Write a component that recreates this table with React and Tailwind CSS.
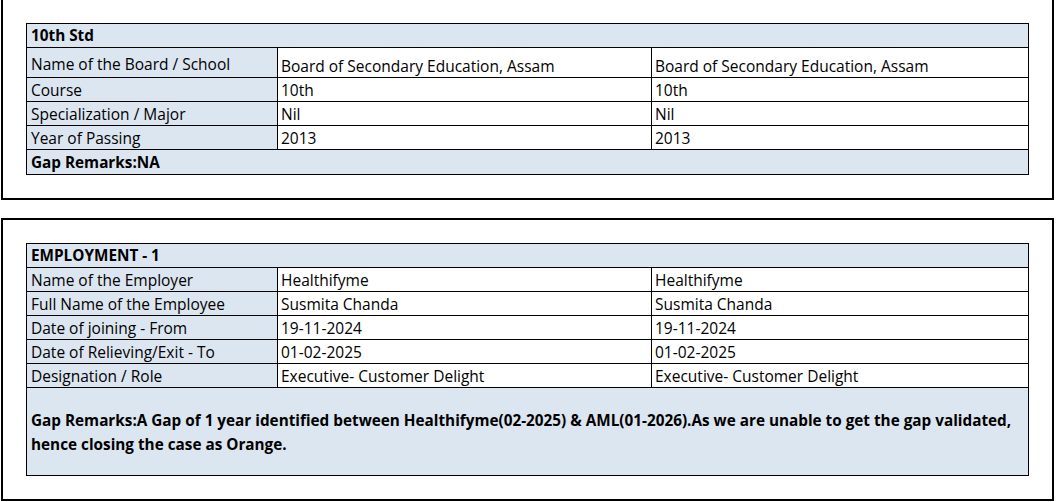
import React from "react";

const BLUE = "bg-[#dce6f1]";

function Row({ label, v1, v2, tall }) {
  const h = tall ? "h-[29px]" : "h-[23px]";
  return (
    <>
      <div className={`${h} ${BLUE} flex items-end pl-[4px] leading-[21px] ${tall ? "pb-[2px]" : ""}`}>{label}</div>
      <div className={`${h} bg-white flex items-end pl-[3px] leading-[21px]`}>{v1}</div>
      <div className={`${h} bg-white flex items-end pl-[3px] leading-[21px]`}>{v2}</div>
    </>
  );
}

export default function App() {
  return (
    <div className="bg-white w-[1057px] h-[502px] pl-px text-black text-[15.5px] font-['Open_Sans',_'Liberation_Sans',_sans-serif] overflow-hidden">
      <div className="w-[1053px] border-x-2 border-b-2 border-black px-[23px] pt-[23px] pb-[23px]">
        <div className="grid grid-cols-[250px_373px_376px] gap-px bg-black border border-black w-[1003px]">
          <div className={`col-span-3 h-[23px] ${BLUE} flex items-center pl-[4px] font-bold text-[15.3px]`}>10th Std</div>
          <Row label="Name of the Board / School" v1="Board of Secondary Education, Assam" v2="Board of Secondary Education, Assam" tall />
          <Row label="Course" v1="10th" v2="10th" />
          <Row label="Specialization / Major" v1="Nil" v2="Nil" />
          <Row label="Year of Passing" v1="2013" v2="2013" />
          <div className={`col-span-3 h-[24px] ${BLUE} flex items-center pl-[4px] font-bold text-[15.3px]`}>Gap Remarks:NA</div>
        </div>
      </div>
      <div className="mt-[18px] w-[1053px] border-2 border-black p-[23px]">
        <div className="grid grid-cols-[250px_373px_376px] gap-px bg-black border border-black w-[1003px]">
          <div className={`col-span-3 h-[23px] ${BLUE} flex items-center pl-[4px] font-bold text-[15.3px]`}>EMPLOYMENT - 1</div>
          <Row label="Name of the Employer" v1="Healthifyme" v2="Healthifyme" />
          <Row label="Full Name of the Employee" v1="Susmita Chanda" v2="Susmita Chanda" />
          <Row label="Date of joining - From" v1="19-11-2024" v2="19-11-2024" />
          <Row label="Date of Relieving/Exit - To" v1="01-02-2025" v2="01-02-2025" />
          <Row label="Designation / Role" v1="Executive- Customer Delight" v2="Executive- Customer Delight" />
          <div className={`col-span-3 h-[87px] ${BLUE} flex items-center pl-[4px] font-bold text-[15.3px] leading-[24px] whitespace-nowrap`}>
            <div>
              Gap Remarks:A Gap of 1 year identified between Healthifyme(02-2025) &amp; AML(01-2026).As we are unable to get the gap validated,
              <br />
              hence closing the case as Orange.
            </div>
          </div>
        </div>
      </div>
    </div>
  );
}
